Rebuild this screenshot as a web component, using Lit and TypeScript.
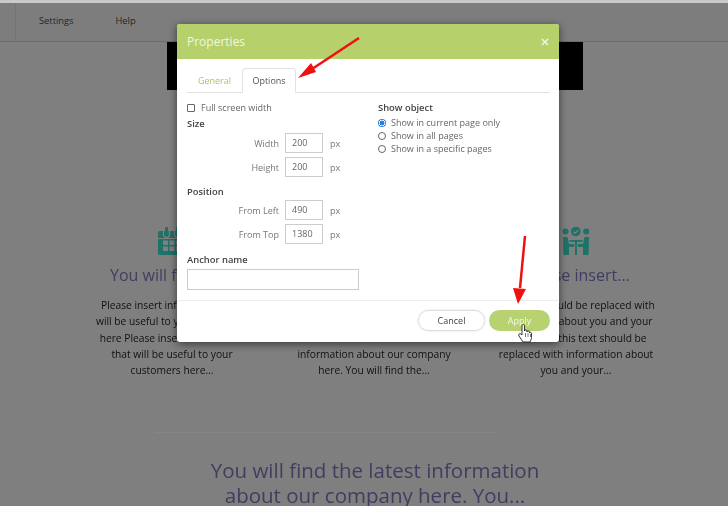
import { LitElement, html, css, svg } from "lit";
import { customElement } from "lit/decorators.js";

const calendar = html`<svg class="ico" viewBox="0 0 28 28"><path fill="#1e7268" d="M2 4h26v22a2 2 0 0 1-2 2H2a2 2 0 0 1-2-2V6a2 2 0 0 1 2-2z"/><path fill="none" stroke="#7f7f7f" stroke-width="1.200" d="M5.500 4v3.500a3 3 0 0 0 6 0V4M16.500 4v3.500a3 3 0 0 0 6 0V4"/><path fill="#1e7268" d="M7 0h3v8H7zM18 0h3v8h-3z"/><g fill="#7f7f7f"><rect x="0" y="11" width="28" height="1"/><rect x="5" y="13.500" width="5" height="4.500"/><rect x="11.500" y="13.500" width="5" height="4.500"/><rect x="18" y="13.500" width="5" height="4.500"/><rect x="5" y="19.500" width="5" height="4.500"/><rect x="11.500" y="19.500" width="5" height="4.500"/><rect x="18" y="19.500" width="5" height="4.500"/></g></svg>`;

const people = html`<svg class="ico" viewBox="0 0 28 28"><g fill="#1e7268"><circle cx="13.800" cy="4.500" r="4.800"/><circle cx="3.500" cy="4.500" r="3"/><circle cx="24.200" cy="4.500" r="3"/><path d="M1 10h4.500l1.500 7h5v3H7v8H1.500zM27 10h-4.500L21 17h-5v3h5v8h5.500zM7.500 13h13v1.800h-5.500V28h-2V14.800H7.500z"/></g><path d="M11.500 4.600l1.700 1.700 3-3.200" fill="none" stroke="#7f7f7f" stroke-width="1.300"/></svg>`;

@customElement("app-root")
export class AppRoot extends LitElement {
  static styles = css`
    :host { display: block; width: 728px; height: 506px; position: relative; overflow: hidden; background: #7f7f7f; font-family: "Open Sans", sans-serif; }
    .page { filter: blur(0.4px); display: flex; flex-direction: column; }
    .strip { height: 3px; background: #c9c9c9; }
    .topbar { height: 39px; box-sizing: border-box; display: flex; align-items: center; padding: 0 0 0 15px; border-bottom: 1px solid #6b6b6b; background: #7d7d7d; font-size: 9.300px; color: #262626; }
    .topbar nav { height: 100%; display: flex; align-items: center; gap: 42px; padding: 0 0 3px 23px; box-sizing: border-box; border-left: 1px solid #737373; }
    .hero { width: 416px; height: 48px; margin-left: 167px; background: #000; }
    .cols { display: grid; grid-template-columns: repeat(3, 202px); margin: 137px 0 0 71px; }
    .col { display: flex; flex-direction: column; align-items: center; text-align: center; }
    .ico { width: 28px; height: 28px; display: block; }
    .col h3 { margin: 10px 0 0; font-size: 16px; line-height: 20px; font-weight: 400; color: #3f3e60; white-space: nowrap; }
    .col p { margin: 12px 0 0; font-size: 10.250px; line-height: 16.300px; color: #111; white-space: nowrap; }
    .rule { width: 342px; height: 1px; margin: 54px 0 0 155px; background: #868686; }
    .headline { margin: 25px 0 0; width: 728px; text-align: center; font-size: 20.500px; line-height: 25px; font-weight: 400; color: #3f3e60; padding-left: 22px; box-sizing: border-box; }

    .dialog { position: absolute; left: 177px; top: 24px; width: 382px; height: 318px; background: #fff; border-radius: 3px; box-shadow: 0 2px 8px rgba(0,0,0,.55); display: flex; flex-direction: column; font-size: 9px; color: #666; overflow: hidden; filter: blur(0.25px); }
    .dh { height: 35px; flex: none; background: #b6d06b; color: #f2f6e2; display: flex; align-items: center; justify-content: space-between; padding: 0 10px 0 10px; font-size: 12px; }
    .dh svg { width: 8px; height: 8px; display: block; }
    .tabs { margin: 7px 9px 0 10px; height: 26px; border-bottom: 1px solid #e2e2e2; display: flex; align-items: flex-end; flex: none; }
    .tab { height: 25px; display: flex; align-items: center; justify-content: center; margin-bottom: -1px; box-sizing: border-box; }
    .t1 { width: 55px; color: #a9c468; }
    .t2 { width: 54px; border: 1px solid #e2e2e2; border-bottom: 1px solid #fff; border-radius: 4px 4px 0 0; color: #555; }
    .body { flex: 1; display: flex; padding: 9px 0 0 10px; }
    .left { width: 191px; }
    .check { display: flex; align-items: center; gap: 6px; height: 11px; }
    .box { width: 6px; height: 6px; border: 1px solid #666; border-radius: 1px; }
    .b { font-weight: 600; color: #444; line-height: 13px; font-size: 9.400px; }
    .size { margin-top: 4px; }
    .row { display: flex; align-items: center; height: 20px; margin-top: 4px; }
    .b + .row { margin-top: 3px; }
    .pos + .row { margin-top: 2px; }
    .row label { width: 92px; text-align: right; color: #777; }
    .inp { width: 38px; height: 20px; box-sizing: border-box; border: 1px solid #ccc; margin-left: 6px; padding-left: 6px; line-height: 18px; color: #666; }
    .row span { margin-left: 7px; color: #777; }
    .pos { margin-top: 8px; }
    .anch { margin-top: 9px; }
    .anchor { width: 172px; height: 21px; box-sizing: border-box; border: 1px solid #ccc; margin-top: 3px; }
    .right { margin-top: -1px; }
    .radio { display: flex; align-items: center; gap: 5px; height: 13px; color: #666; }
    .b + .radio { margin-top: 2px; }
    .rd { width: 6px; height: 6px; border: 1px solid #666; border-radius: 50%; }
    .rd.on { width: 8px; height: 8px; border: none; background: radial-gradient(circle, #2f7de0 0 2.200px, #fff 2.700px 3px, #2f7de0 3.500px); }
    .foot { height: 42px; box-sizing: border-box; flex: none; border-top: 1px solid #eee; padding: 9px 9px 0 0; display: flex; justify-content: flex-end; gap: 4px; align-items: flex-start; }
    .btn { height: 21px; border-radius: 11px; display: flex; align-items: center; justify-content: center; box-sizing: border-box; }
    .cancel { width: 67px; border: 1px solid #ddd; color: #444; box-shadow: 0 0 2px rgba(0,0,0,.15); }
    .apply { width: 61px; background: #b8d272; color: #f4f8e6; }
    .over { position: absolute; left: 0; top: 0; width: 728px; height: 506px; pointer-events: none; }
  `;

  render() {
    return html`
      <div class="page">
        <div class="strip"></div>
        <div class="topbar"><nav><span>Settings</span><span>Help</span></nav></div>
        <div class="hero"></div>
        <div class="cols">
          <div class="col">${calendar}<h3>You will find all...</h3>
            <p>Please insert information that<br>will be useful to your customers<br>here Please insert information<br>that will be useful to your<br>customers here...</p></div>
          <div class="col"><div class="ico"></div><h3>&nbsp;</h3>
            <p>&nbsp;<br>&nbsp;<br>&nbsp;<br>information about our company<br>here. You will find the...</p></div>
          <div class="col">${people}<h3>Please insert...</h3>
            <p>This text should be replaced with<br>information about you and your<br>customers this text should be<br>replaced with information about<br>you and your...</p></div>
        </div>
        <div class="rule"></div>
        <h2 class="headline">You will find the latest information<br>about our company here. You...</h2>
      </div>

      <div class="dialog">
        <div class="dh"><span>Properties</span>
          <svg viewBox="0 0 8 8"><path d="M1 1l6 6M7 1l-6 6" stroke="#f4f8e6" stroke-width="1.400"/></svg></div>
        <div class="tabs"><div class="tab t1">General</div><div class="tab t2">Options</div></div>
        <div class="body">
          <div class="left">
            <div class="check"><div class="box"></div>Full screen width</div>
            <div class="b size">Size</div>
            <div class="row"><label>Width</label><div class="inp">200</div><span>px</span></div>
            <div class="row"><label>Height</label><div class="inp">200</div><span>px</span></div>
            <div class="b pos">Position</div>
            <div class="row"><label>From Left</label><div class="inp">490</div><span>px</span></div>
            <div class="row"><label>From Top</label><div class="inp">1380</div><span>px</span></div>
            <div class="b anch">Anchor name</div>
            <div class="anchor"></div>
          </div>
          <div class="right">
            <div class="b">Show object</div>
            <div class="radio"><div class="rd on"></div>Show in current page only</div>
            <div class="radio"><div class="rd"></div>Show in all pages</div>
            <div class="radio"><div class="rd"></div>Show in a specific pages</div>
          </div>
        </div>
        <div class="foot"><div class="btn cancel">Cancel</div><div class="btn apply">Apply</div></div>
      </div>

      <svg class="over" viewBox="0 0 728 506">
        ${svg`<path d="M359 38L309 71" stroke="#f01010" stroke-width="2.500" fill="none"/>
        <path d="M298 78L311 63L316 72Z" fill="#f01010"/>
        <path d="M525 236L520 288" stroke="#f01010" stroke-width="2.500" fill="none"/>
        <path d="M518 304L513 288L526 289Z" fill="#f01010"/>
        <path d="M523 342l-4-6c-1-2 1-3 2-2l1 1V326c0-2 2.500-2 2.500 0v5c0-1.500 2.500-1.500 2.500 0v1c0-1.500 2.500-1.500 2.500 0v1c0-1 2-1 2 .5v4c0 2-1 3-1.500 4.500z" fill="#fff" stroke="#222" stroke-width=".9"/>
        <path d="M525.500 333v4M528 333v4M530.500 334v3" stroke="#222" stroke-width=".6"/>`}
      </svg>
    `;
  }
}
